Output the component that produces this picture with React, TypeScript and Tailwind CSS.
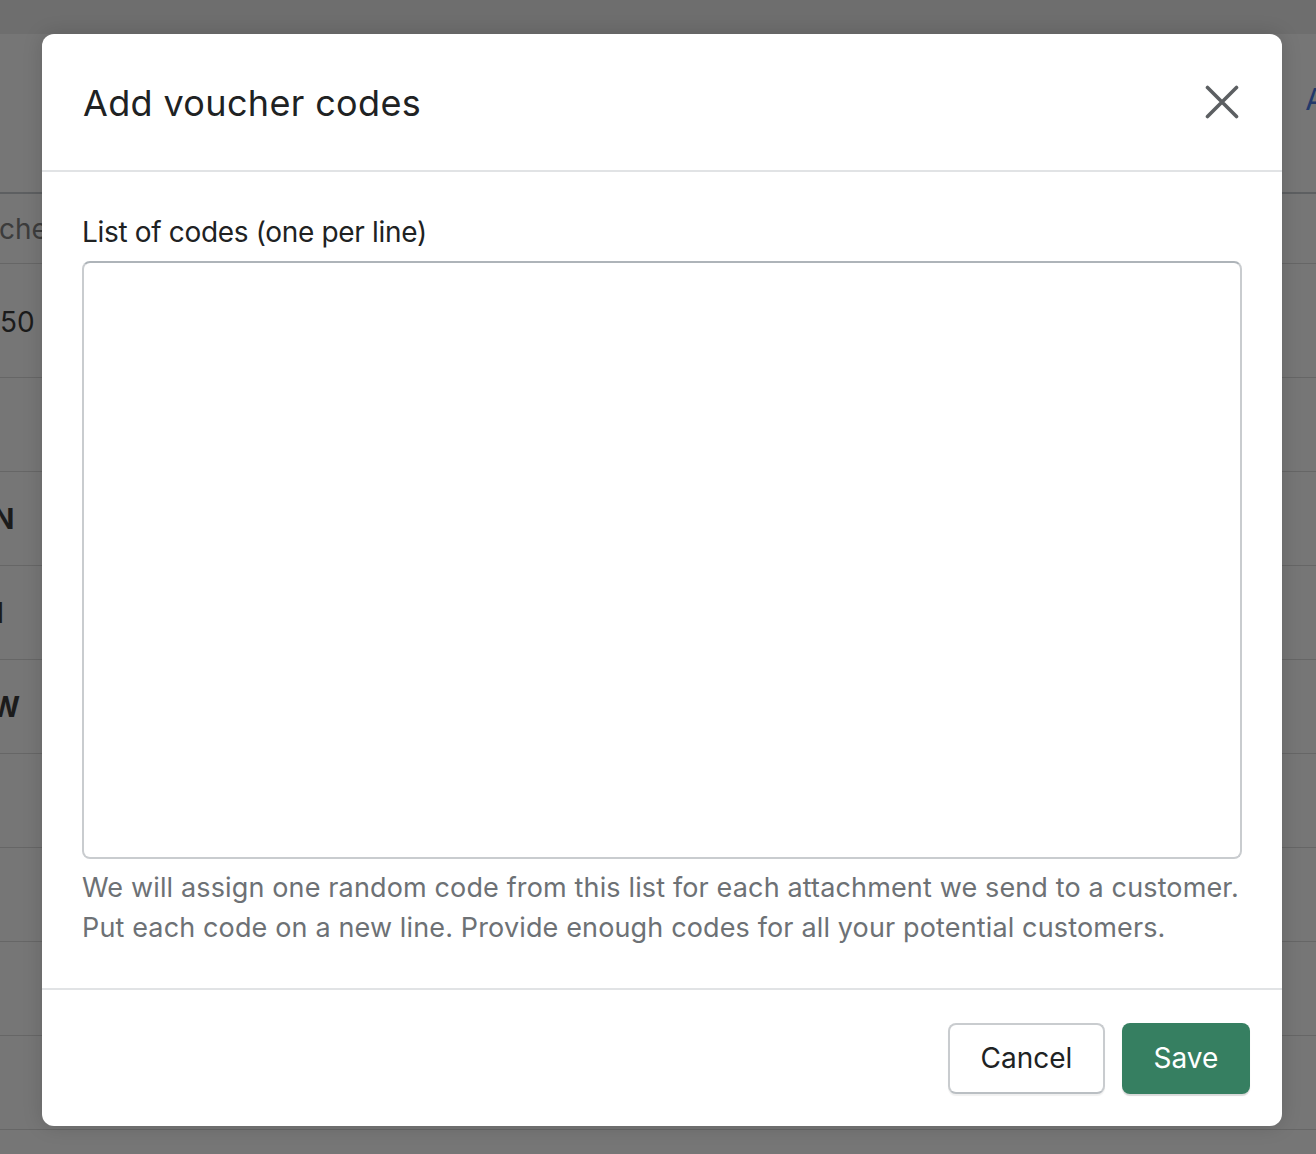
import React from "react";

const font = { fontFamily: "Inter, 'Noto Sans', 'Liberation Sans', sans-serif" };

function Row({ h, children, bold }: { h: string; children?: React.ReactNode; bold?: boolean }) {
  return (
    <div className={`${h} flex items-center border-b border-[#666666] text-[28px] text-[#1b1b1b] ${bold ? "font-bold" : ""}`}>
      {children}
    </div>
  );
}

function CloseIcon() {
  return (
    <svg width="34" height="34" viewBox="0 0 34 34" fill="none">
      <path d="M2.5 2.5L31.5 31.5M31.5 2.5L2.5 31.5" stroke="#5c5f62" strokeWidth="3.6" strokeLinecap="round" />
    </svg>
  );
}

export default function App() {
  return (
    <div className="relative w-[1316px] h-[1154px] overflow-hidden bg-[#767676]" style={font}>
      {/* dimmed page underneath */}
      <div className="h-[34px] bg-[#6e6e6e]" />
      <div className="h-[158px] flex justify-end items-start pt-[50px]">
        <span className="text-[30px] text-[#23396a] leading-none -mr-[10px]">A</span>
      </div>
      <div className="h-[2px] bg-[#5d5f61]" />
      <Row h="h-[70px]">
        <span className="text-[#3c3c3c] -ml-[1px]">che</span>
      </Row>
      <Row h="h-[114px]">
        <span className="pt-[2px]">50</span>
      </Row>
      <Row h="h-[94px]" />
      <Row h="h-[94px]" bold>
        <span className="-ml-[7px]">N</span>
      </Row>
      <Row h="h-[94px]" bold>
        <span className="-ml-[4px]">l</span>
      </Row>
      <Row h="h-[94px]" bold>
        <span className="-ml-[9px]">W</span>
      </Row>
      <Row h="h-[94px]" />
      <Row h="h-[94px]" />
      <Row h="h-[94px]" />
      <Row h="h-[94px]" />

      {/* modal dialog */}
      <div className="absolute left-[42px] top-[34px] w-[1240px] h-[1092px] rounded-[12px] bg-white flex flex-col shadow-[0_0_20px_rgba(0,0,0,0.15)]">
        <div className="h-[138px] flex items-center justify-between pl-[41px] pr-[43px] border-b-2 border-[#e1e3e5] shrink-0">
          <h2 className="text-[36px] leading-[44px] text-[#202223] font-normal tracking-[0.35px] pt-[2px]">Add voucher codes</h2>
          <CloseIcon />
        </div>
        <div className="px-[40px] pt-[40px] pb-[40px] flex flex-col">
          <label className="text-[28px] leading-[40px] text-[#202223] tracking-[-0.33px]">List of codes (one per line)</label>
          <textarea className="mt-[9px] h-[598px] w-full rounded-[8px] border-2 border-[#c9cccf] border-t-[#aeb4b9] resize-none outline-none" />
          <p className="mt-[9px] text-[27px] leading-[40px] text-[#6d7175] tracking-[0.14px]">
            We will assign one random code from this list for each attachment we send to a customer.
            <br />
            Put each code on a new line. Provide enough codes for all your potential customers.
          </p>
        </div>
        <div className="flex-1 border-t-2 border-[#e1e3e5] flex items-center justify-end gap-[17px] pr-[32px]">
          <button className="w-[157px] h-[71px] rounded-[8px] border-2 border-[#c9cccf] border-b-[#babfc3] bg-white text-[28px] text-[#202223] shadow-[0_2px_1px_rgba(0,0,0,0.06)]">
            Cancel
          </button>
          <button className="w-[128px] h-[71px] rounded-[8px] bg-[#367f61] text-[28px] text-white shadow-[0_2px_1px_rgba(0,0,0,0.15)]">
            Save
          </button>
        </div>
      </div>
    </div>
  );
}
